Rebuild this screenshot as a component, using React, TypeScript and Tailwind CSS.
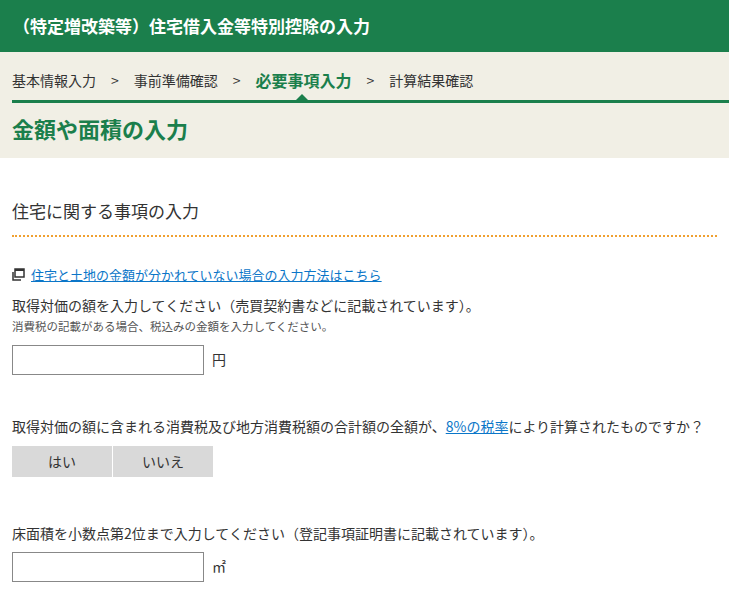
export default function App() {
  const f = { fontFamily: '"Noto Sans CJK JP","Noto Sans",sans-serif' };
  return (
    <div className="w-[729px] h-[609px] overflow-hidden bg-white text-[#333]" style={f}>
      <div className="h-[52px] bg-[#1b7f4c] flex items-center px-[13px] text-white text-[17px] font-bold">
        （特定増改築等）住宅借入金等特別控除の入力
      </div>
      <div className="bg-[#f1efe5] h-[106px] pl-[12px] pt-[15px]">
        <div className="flex items-center text-[14px] h-[26px] text-[#333]">
          <span>基本情報入力</span>
          <span className="mx-[15px]">&gt;</span>
          <span>事前準備確認</span>
          <span className="mx-[15px]">&gt;</span>
          <span className="text-[#1b7f4c] font-bold text-[16px]">必要事項入力</span>
          <span className="mx-[15px]">&gt;</span>
          <span>計算結果確認</span>
        </div>
        <div className="relative h-[3px] bg-[#1b7f4c] mt-[7px]">
          <div className="absolute left-[284px] -top-[6px] w-0 h-0 border-l-[6px] border-r-[6px] border-b-[6px] border-l-transparent border-r-transparent border-b-[#1b7f4c]" />
        </div>
        <div className="text-[#1b7f4c] text-[22px] font-bold mt-[10px] leading-[30px]">金額や面積の入力</div>
      </div>
      <div className="px-[12px]">
        <div className="mt-[40px] text-[17px] leading-[26px]">住宅に関する事項の入力</div>
        <div className="mt-[11px] border-b-2 border-dotted border-[#f0a030]" />
        <div className="mt-[28px] flex items-center gap-[6px] text-[13px]">
          <svg width="13" height="13" viewBox="0 0 13 13"><rect x="3" y="1" width="9" height="8" fill="none" stroke="#333" strokeWidth="1.5"/><rect x="3" y="1" width="9" height="2" fill="#333"/><path d="M1 4v8h8" fill="none" stroke="#333" strokeWidth="1.5"/></svg>
          <span className="text-[#0b76c8] underline">住宅と土地の金額が分かれていない場合の入力方法はこちら</span>
        </div>
        <div className="mt-[9px] text-[14px] leading-[22px]">取得対価の額を入力してください（売買契約書などに記載されています）。</div>
        <div className="mt-[1px] text-[11.5px] text-[#555] leading-[18px]">消費税の記載がある場合、税込みの金額を入力してください。</div>
        <div className="mt-[10px] flex items-center gap-[8px]">
          <div className="w-[192px] h-[30px] border border-[#888] bg-white" />
          <span className="text-[14px]">円</span>
        </div>
        <div className="mt-[40px] text-[14px] leading-[22px]">取得対価の額に含まれる消費税及び地方消費税額の合計額の全額が、<span className="text-[#0b76c8] underline">8%の税率</span>により計算されたものですか？</div>
        <div className="mt-[9px] flex gap-[1px] text-[14px]">
          <div className="w-[100px] h-[31px] bg-[#d9d9d9] flex items-center justify-center">はい</div>
          <div className="w-[100px] h-[31px] bg-[#d9d9d9] flex items-center justify-center">いいえ</div>
        </div>
        <div className="mt-[45px] text-[14px] leading-[22px]">床面積を小数点第2位まで入力してください（登記事項証明書に記載されています）。</div>
        <div className="mt-[8px] flex items-center gap-[8px]">
          <div className="w-[192px] h-[30px] border border-[#888] bg-white" />
          <span className="text-[14px]">㎡</span>
        </div>
      </div>
    </div>
  );
}
